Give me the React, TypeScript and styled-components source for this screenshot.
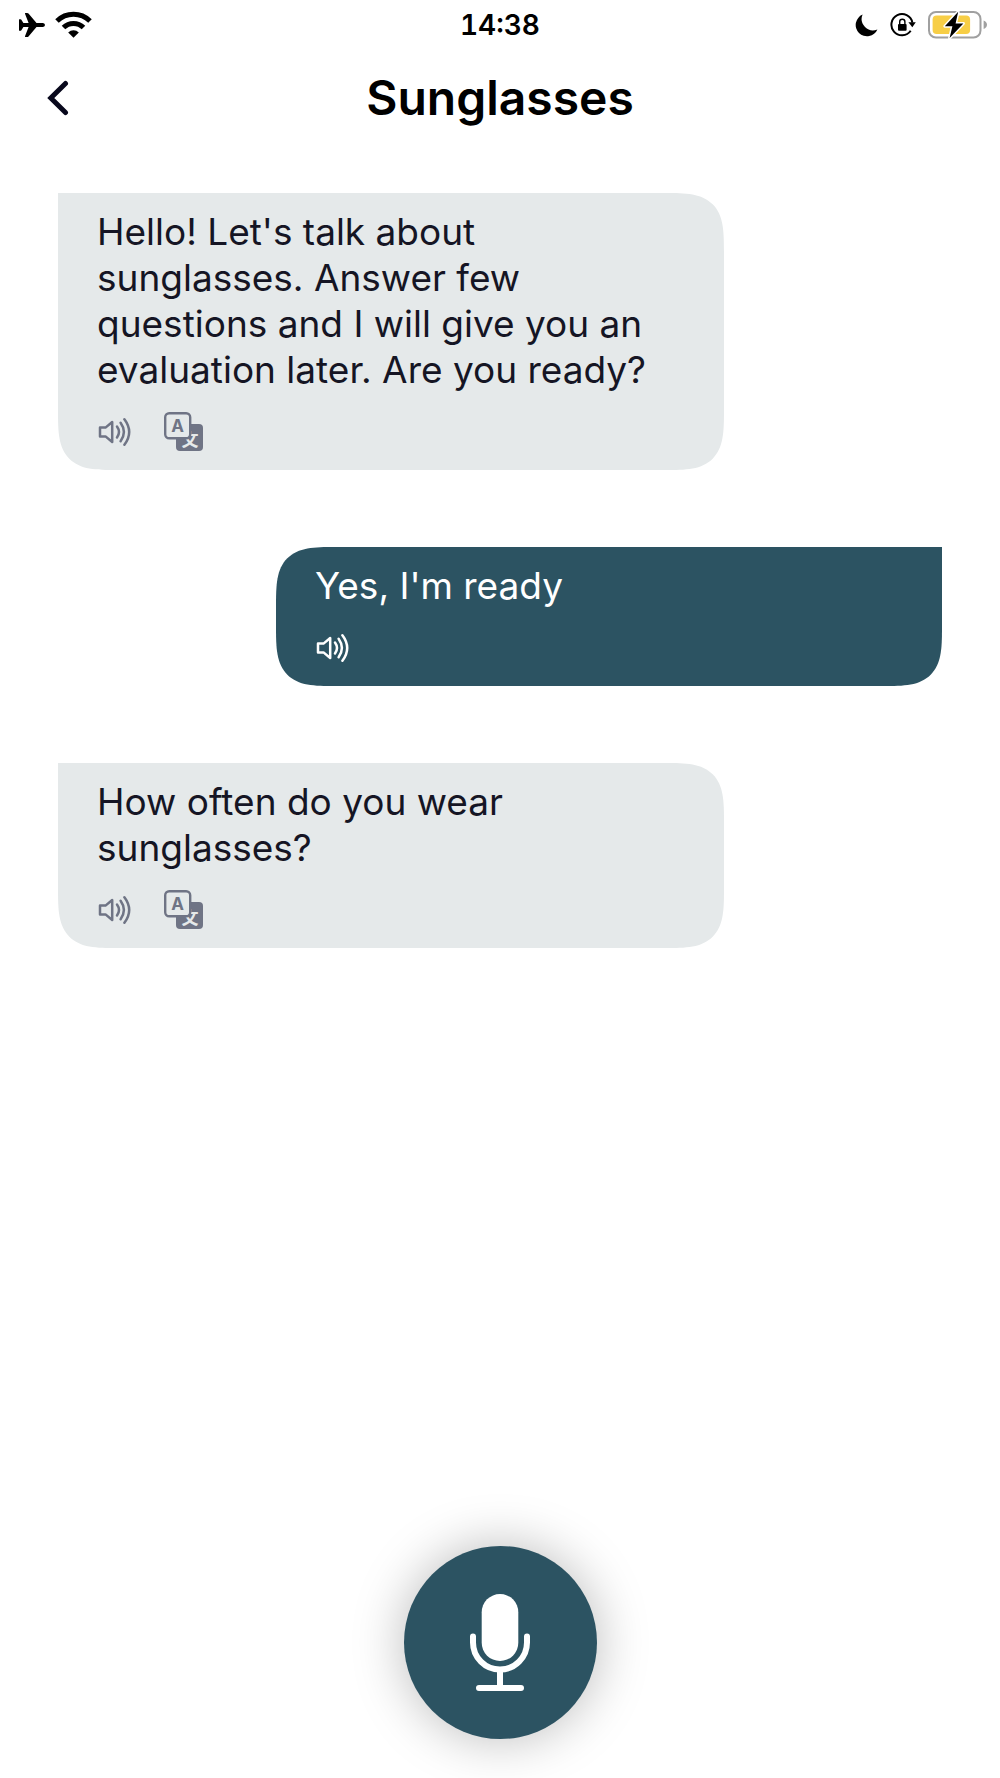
import React from "react";
import styled, { createGlobalStyle, css } from "styled-components";

const teal = "#2c5362";
const mist = "#e5e9ea";
const slate = "#6f7485";
const ink = "#151524";

const GlobalStyle = createGlobalStyle`
  *, *::before, *::after { box-sizing: border-box; }
  body {
    margin: 0;
    background: #fff;
    font-family: Inter, "Liberation Sans", sans-serif;
  }
`;

const Screen = styled.div`
  display: flex;
  flex-direction: column;
  min-height: 100vh;
  background: #fff;
`;

const StatusBar = styled.div`
  display: grid;
  grid-template-columns: 1fr auto 1fr;
  align-items: center;
  height: 50px;
  color: #000;
`;

const StatusGroup = styled.div<{ $end?: boolean }>`
  display: flex;
  align-items: center;
  justify-content: ${(p) => (p.$end ? "flex-end" : "flex-start")};
  gap: ${(p) => (p.$end ? "12px" : "9px")};
  padding: ${(p) => (p.$end ? "0 12px 0 0" : "0 0 0 18px")};
`;

const Clock = styled.time`
  font-size: 28px;
  font-weight: 600;
  font-variant-numeric: tabular-nums;
  line-height: 34px;
`;

const Header = styled.header`
  display: grid;
  grid-template-columns: 1fr auto 1fr;
  align-items: center;
  height: 96px;
  padding: 0 38px;
`;

const PlainButton = styled.button`
  display: flex;
  align-items: center;
  padding: 0;
  border: 0;
  background: none;
  color: inherit;
  cursor: pointer;
`;

const BackButton = styled(PlainButton)`
  justify-self: start;
  padding: 4px 8px;
  color: #08081c;
`;

const Title = styled.h1`
  margin: 0;
  font-size: 48px;
  font-weight: 600;
  line-height: 58px;
  color: #000;
`;

const Chat = styled.main`
  flex: 1;
  display: flex;
  flex-direction: column;
  gap: 77px;
  padding: 47px 58px;
`;

type Side = "bot" | "user";

const corners = {
  bot: css`
    border-radius: 0 39px 39px 39px;
    @supports (corner-shape: superellipse(1.7)) {
      border-radius: 0 59px 59px 59px;
    }
  `,
  user: css`
    border-radius: 39px 0 39px 39px;
    @supports (corner-shape: superellipse(1.7)) {
      border-radius: 59px 0 59px 59px;
    }
  `,
};

const Bubble = styled.article<{ $side: Side }>`
  width: 100%;
  max-width: 666px;
  align-self: ${(p) => (p.$side === "user" ? "flex-end" : "flex-start")};
  padding: 16px 39px 18px;
  background: ${(p) => (p.$side === "user" ? teal : mist)};
  color: ${(p) => (p.$side === "user" ? "#fff" : ink)};
  ${(p) => corners[p.$side]}
  corner-shape: superellipse(1.7);
`;

const Message = styled.p`
  margin: 0;
  font-size: 37px;
  line-height: 46px;
`;

const Actions = styled.div<{ $side: Side }>`
  display: flex;
  align-items: center;
  gap: 32px;
  height: 40px;
  margin-top: 19px;
  color: ${(p) => (p.$side === "user" ? "#fff" : slate)};
`;

const Footer = styled.footer`
  display: flex;
  justify-content: center;
  padding: 0 0 39px;
`;

const MicButton = styled(PlainButton)`
  justify-content: center;
  width: 193px;
  height: 193px;
  border-radius: 50%;
  background: ${teal};
  color: #fff;
  box-shadow: 0 0 52px rgba(0, 0, 0, 0.27);
`;

const AirplaneIcon = () => (
  <svg width="28" height="26" viewBox="0 0 28 26" fill="currentColor" aria-hidden="true">
    <path d="M25 11 H18.5 L10.5 1.6 Q10 1 9.2 1 H7.4 Q6.8 1 7 1.7 L10.6 11 H5.4 L3.2 7.6 Q2.9 7.2 2.4 7.2 H1.4 Q1 7.2 1 7.7 V18.3 Q1 18.8 1.4 18.8 H2.4 Q2.9 18.8 3.2 18.4 L5.4 15 H10.6 L7 24.3 Q6.8 25 7.4 25 H9.2 Q10 25 10.5 24.4 L18.5 15 H25 Q27 14.6 27 13 Q27 11.4 25 11 Z" />
  </svg>
);

const WifiIcon = () => (
  <svg width="37" height="28" viewBox="0 0 37 28" fill="none" stroke="currentColor" aria-hidden="true">
    <path d="M2 10 A23.5 23.5 0 0 1 35 10" strokeWidth="5" />
    <path d="M8.5 16.6 A14.2 14.2 0 0 1 28.5 16.6" strokeWidth="5" />
    <path d="M13.2 21.5 A7.6 7.6 0 0 1 23.8 21.5 L18.5 26.8 Z" fill="currentColor" stroke="none" />
  </svg>
);

const MoonIcon = () => (
  <svg width="23" height="23" viewBox="0 0 23 23" fill="currentColor" aria-hidden="true">
    <path d="M7.6 0.6 A11.3 11.3 0 1 0 22.4 15.4 A11.3 11.3 0 0 1 7.6 0.6 Z" />
  </svg>
);

const RotationLockIcon = () => (
  <svg width="26" height="24" viewBox="0 0 26 24" fill="none" stroke="currentColor" aria-hidden="true">
    <path d="M20.7 17.8 A10.6 10.6 0 1 1 22.4 9.6" strokeWidth="2" />
    <path d="M18.4 9.2 H25.8 L22.3 14.2 Z" fill="currentColor" stroke="none" />
    <rect x="8" y="11" width="8.6" height="6.8" rx="1" fill="currentColor" stroke="none" />
    <path d="M9.7 11.5 V8.8 a2.6 2.6 0 0 1 5.2 0 V11.5" strokeWidth="1.4" />
  </svg>
);

const BatteryIcon = () => (
  <svg width="60" height="30" viewBox="0 0 60 30" aria-hidden="true">
    <rect x="1" y="2" width="51.5" height="25.6" rx="7" fill="none" stroke="#a0a0a0" strokeWidth="2" />
    <rect x="4.6" y="5.4" width="37.5" height="18.6" rx="4" fill="#f7ce46" />
    <path d="M55.6 10.5 Q59 12 59 14.8 Q59 17.6 55.6 19.1 Z" fill="#a0a0a0" />
    <path
      d="M30.2 1.8 L16.8 16.2 H24.4 L21.6 28 L35.4 13.4 H27.6 Z"
      fill="#000"
      stroke="#fff"
      strokeWidth="3"
      strokeLinejoin="round"
      paintOrder="stroke"
    />
  </svg>
);

const ChevronIcon = () => (
  <svg width="24" height="36" viewBox="0 0 24 36" fill="none" stroke="currentColor" strokeWidth="5" strokeLinecap="round" aria-hidden="true">
    <path d="M19.5 3.5 L4.8 18 L19.5 32.5" />
  </svg>
);

const SpeakerIcon = () => (
  <svg width="35" height="30" viewBox="1 0 35 30" fill="none" stroke="currentColor" strokeWidth="2.5" strokeLinecap="round" aria-hidden="true">
    <path d="M4 10.600 H9.500 L16.200 5 V25 L9.500 19.400 H4 Z" strokeLinejoin="round" />
    <path d="M21 9.500 Q25 15 21 20.500" />
    <path d="M24.600 5.800 Q31.200 15 24.600 24.200" />
    <path d="M28.400 2.200 Q38 15 28.400 27.800" />
  </svg>
);

const TranslateIcon = () => (
  <svg width="40" height="40" viewBox="0 0 40 40" aria-hidden="true">
    <rect x="12" y="12" width="27" height="27" rx="4" fill="currentColor" />
    <text x="26" y="34" textAnchor="middle" fontFamily="'Noto Sans CJK JP', sans-serif" fontWeight="700" fontSize="17" fill={mist}>文</text>
    <rect x="1.2" y="1.2" width="25" height="25" rx="4" fill={mist} stroke="currentColor" strokeWidth="2.4" />
    <text x="13.5" y="19.5" textAnchor="middle" fontFamily="Inter, sans-serif" fontWeight="700" fontSize="17" fill="currentColor">A</text>
  </svg>
);

const MicIcon = () => (
  <svg width="64" height="97" viewBox="0 0 64 97" fill="none" stroke="currentColor" strokeWidth="6" strokeLinecap="round" aria-hidden="true">
    <rect x="13.7" y="0" width="36.6" height="67" rx="18.3" fill="currentColor" stroke="none" />
    <path d="M5 42.5 V48.5 a27 27 0 0 0 54 0 V42.5" />
    <path d="M32 76 V94 M11 94 H53" />
  </svg>
);

const messages: { side: Side; text: string }[] = [
  {
    side: "bot",
    text: "Hello! Let's talk about sunglasses. Answer few questions and I will give you an evaluation later. Are you ready?",
  },
  { side: "user", text: "Yes, I'm ready" },
  { side: "bot", text: "How often do you wear sunglasses?" },
];

export default function App() {
  return (
    <Screen>
      <GlobalStyle />
      <StatusBar>
        <StatusGroup>
          <AirplaneIcon />
          <WifiIcon />
        </StatusGroup>
        <Clock>14:38</Clock>
        <StatusGroup $end>
          <MoonIcon />
          <RotationLockIcon />
          <BatteryIcon />
        </StatusGroup>
      </StatusBar>
      <Header>
        <BackButton aria-label="Back">
          <ChevronIcon />
        </BackButton>
        <Title>Sunglasses</Title>
      </Header>
      <Chat>
        {messages.map((m) => (
          <Bubble key={m.text} $side={m.side}>
            <Message>{m.text}</Message>
            <Actions $side={m.side}>
              <PlainButton aria-label="Play message">
                <SpeakerIcon />
              </PlainButton>
              {m.side === "bot" && (
                <PlainButton aria-label="Translate message">
                  <TranslateIcon />
                </PlainButton>
              )}
            </Actions>
          </Bubble>
        ))}
      </Chat>
      <Footer>
        <MicButton aria-label="Record answer">
          <MicIcon />
        </MicButton>
      </Footer>
    </Screen>
  );
}
